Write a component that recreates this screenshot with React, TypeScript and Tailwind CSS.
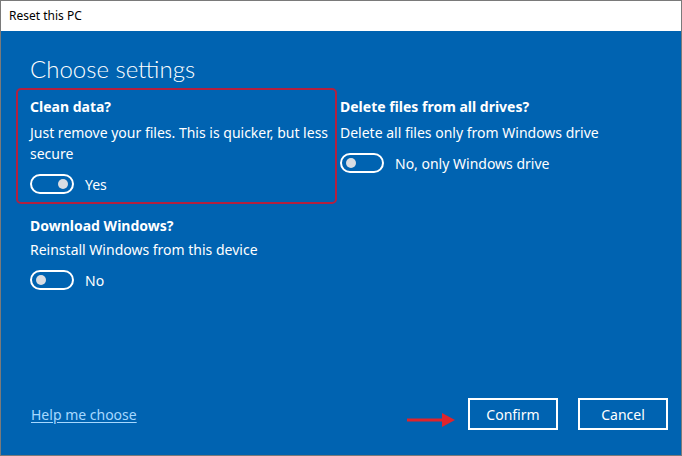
import React, { useState } from 'react';

const font = { fontFamily: '"Noto Sans", "Open Sans", Arial, sans-serif' };

const Toggle: React.FC<{ on: boolean; label: string; onClick: () => void }> = ({ on, label, onClick }) => (
  <button onClick={onClick} className="flex items-center h-[20px] gap-[11px] text-left">
    <span className={`w-[44px] h-[20px] rounded-full border-2 border-white flex items-center px-[4px] ${on ? 'justify-end' : 'justify-start'}`}>
      <span className="w-[10px] h-[10px] rounded-full bg-[#d9dde3]" />
    </span>
    <span className="text-[14px] text-white">{label}</span>
  </button>
);

const Setting: React.FC<{
  title: string;
  desc: React.ReactNode;
  on: boolean;
  label: string;
  onToggle: () => void;
  tight?: boolean;
}> = ({ title, desc, on, label, onToggle, tight }) => (
  <div className="flex flex-col">
    <div className="text-[14px] leading-[20px] font-bold text-white">{title}</div>
    <div className={`text-[14px] leading-[21px] text-white whitespace-nowrap ${tight ? 'mt-[3px]' : 'mt-[5px]'}`}>{desc}</div>
    <div className="mt-[10px]">
      <Toggle on={on} label={label} onClick={onToggle} />
    </div>
  </div>
);

const App: React.FC = () => {
  const [clean, setClean] = useState(true);
  const [allDrives, setAllDrives] = useState(false);
  const [download, setDownload] = useState(false);

  return (
    <div style={font} className="w-[682px] h-[456px] flex flex-col border border-[#7a7a7a] bg-white overflow-hidden">
      <div className="h-[30px] bg-white flex items-center px-[8px] text-[12px] text-black">Reset this PC</div>
      <div className="flex-1 bg-[#0063b1] flex flex-col px-[15px] pb-[25px]">
        <h1 style={{ fontFamily: 'Lato, "Noto Sans", sans-serif' }} className="text-[24px] font-light text-white pl-[14px] mt-[21px] leading-[33px]">
          Choose settings
        </h1>

        <div className="grid grid-cols-[321px_1fr] gap-x-[3px] mt-[3px]">
          <div className="border-2 border-[#b3203f] rounded-[5px] px-[12px] pt-[7px] pb-[8px]">
            <Setting
              title="Clean data?"
              desc={<>Just remove your files. This is quicker, but less<br />secure</>}
              on={clean}
              label={clean ? 'Yes' : 'No'}
              onToggle={() => setClean(v => !v)}
            />
          </div>
          <div className="pt-[9px]">
            <Setting
              title="Delete files from all drives?"
              desc="Delete all files only from Windows drive"
              on={allDrives}
              label={allDrives ? 'Yes' : 'No, only Windows drive'}
              onToggle={() => setAllDrives(v => !v)}
            />
          </div>
          <div className="pl-[14px] pt-[12px]">
            <Setting
              title="Download Windows?"
              desc="Reinstall Windows from this device"
              on={download}
              label={download ? 'Yes' : 'No'}
              onToggle={() => setDownload(v => !v)}
              tight
            />
          </div>
        </div>

        <div className="mt-auto flex items-center">
          <a href="#" className="ml-[15px] text-[14px] text-[#a6d8ff] underline underline-offset-2">Help me choose</a>
          <div className="ml-auto flex items-center">
            <svg width="50" height="14" viewBox="0 0 50 14" className="mr-[12px] mt-[12px]">
              <line x1="1" y1="7" x2="38" y2="7" stroke="#e0242b" strokeWidth="3" />
              <polygon points="36,0 49,7 36,14" fill="#e0242b" />
            </svg>
            <button className="w-[90px] h-[32px] border-2 border-white text-white text-[14px]">Confirm</button>
            <button className="w-[90px] h-[32px] border-2 border-white text-white text-[14px] ml-[20px] mr-[-2px]">Cancel</button>
          </div>
        </div>
      </div>
    </div>
  );
};

export default App;
